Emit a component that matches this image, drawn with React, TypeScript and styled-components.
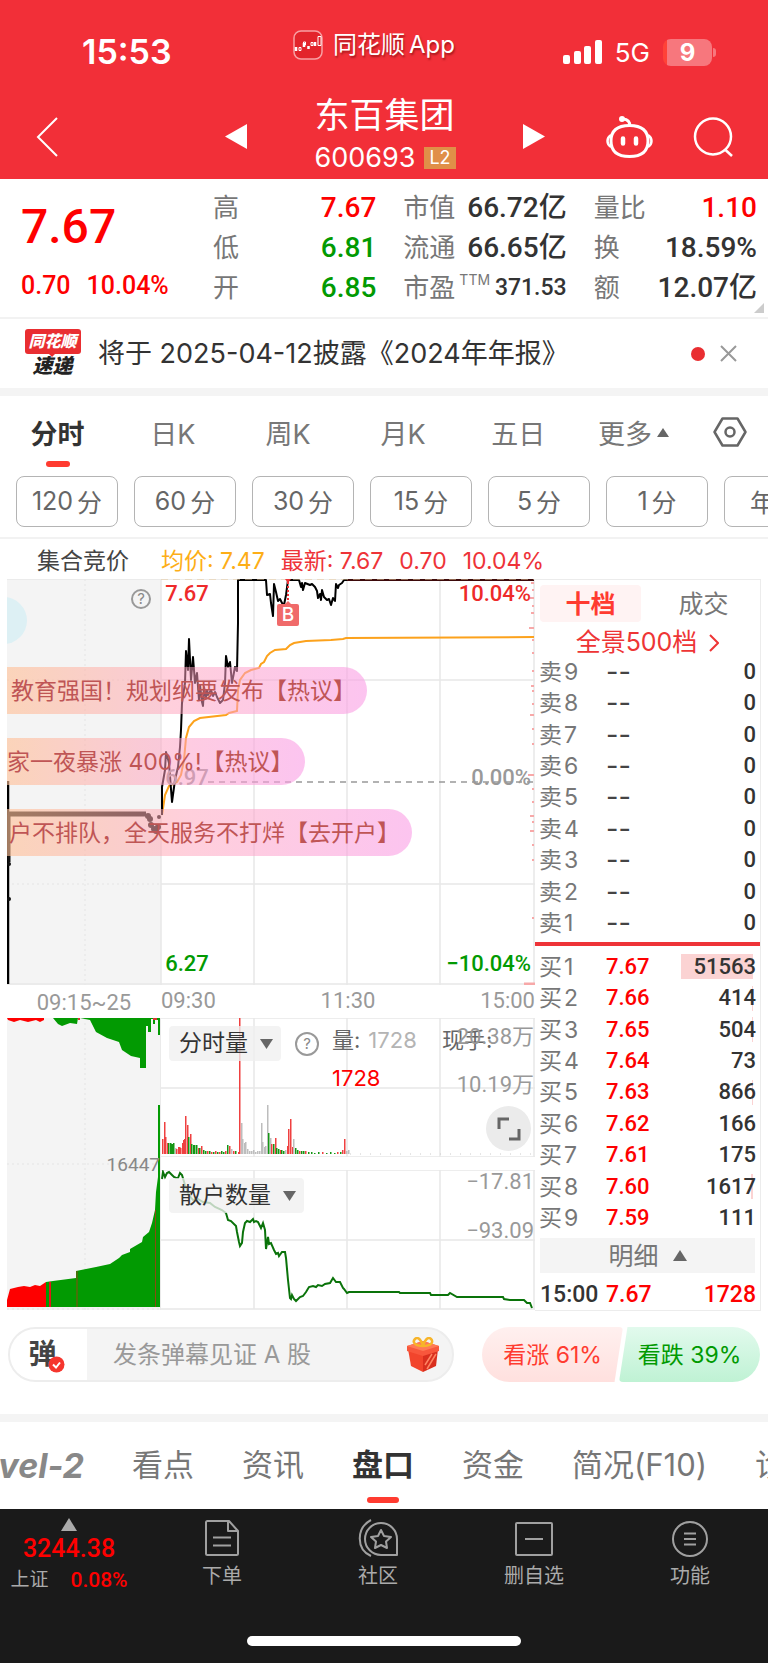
import React from 'react';
import styled, { createGlobalStyle, css } from 'styled-components';

const UI = `Inter, "Noto Sans CJK SC", sans-serif`;
const NUM = `Roboto, "Noto Sans CJK SC", sans-serif`;
const RED = '#fe0000';
const GREEN = '#029a02';

const Global = createGlobalStyle`
  *, *::before, *::after { box-sizing: border-box; }
  body { margin: 0; background: #fff; color: #333; font-family: ${UI}; overflow-x: hidden; }
  button { margin: 0; padding: 0; border: 0; background: none; color: inherit; font: inherit; cursor: pointer; }
  a { color: inherit; text-decoration: none; }
  svg { display: block; flex: none; }
  dl, dd, dt, h1, p { margin: 0; }
`;

const Page = styled.div`
  display: flex;
  flex-direction: column;
  min-height: 100vh;
  overflow: hidden;
`;

/* ---------- header ---------- */
const Header = styled.header`
  background: #f22f38;
  color: #fff;
`;
const StatusBar = styled.div`
  display: grid;
  grid-template-columns: 211px auto 1fr;
  align-items: center;
  height: 94px;
  padding: 10px 56px 0 82px;
`;
const Clock = styled.span`
  font-size: 34px;
  font-weight: 600;
  line-height: 40px;
`;
const Brand = styled.span`
  display: flex;
  align-items: center;
  gap: 10px;
  margin-bottom: 14px;
  font-size: 24px;
  line-height: 30px;
  text-shadow: 1px 2px 2px rgba(90, 0, 0, 0.5);
`;
const BrandName = styled.span`
  display: flex;
  gap: 4px;
`;
const Signals = styled.span`
  display: flex;
  align-items: center;
  justify-content: flex-end;
  gap: 13px;
  font-size: 26px;
`;
const Battery = styled.span`
  position: relative;
  width: 49px;
  height: 27px;
  border-radius: 8px;
  background: linear-gradient(90deg, #ff4238 4px, #f7777d 4px);
  color: #fff;
  font-size: 24px;
  font-weight: 700;
  line-height: 27px;
  text-align: center;
  &::after {
    content: '';
    position: absolute;
    right: -4px;
    top: 9px;
    width: 3px;
    height: 9px;
    border-radius: 0 3px 3px 0;
    background: #f7777d;
  }
`;
const TitleBar = styled.div`
  display: grid;
  grid-template-columns: 1fr auto 1fr;
  align-items: center;
  height: 85px;
  padding: 0 34px 0 36px;
`;
const StockSwitch = styled.div`
  display: flex;
  align-items: center;
  justify-content: space-between;
  width: 320px;
`;
const StockName = styled.h1`
  font-size: 35px;
  font-weight: 400;
  line-height: 42px;
`;
const StockCode = styled.p`
  display: flex;
  align-items: center;
  gap: 9px;
  font-size: 27px;
  line-height: 43px;
`;
const LevelTag = styled.span`
  padding: 0 5px;
  background: #e08f48;
  font-size: 18px;
  line-height: 22px;
`;
const TitleActions = styled.div`
  display: flex;
  justify-content: flex-end;
  gap: 40px;
`;

/* ---------- quote ---------- */
const Quote = styled.section`
  position: relative;
  display: grid;
  grid-template-columns: 165px repeat(3, 1fr);
  column-gap: 27px;
  padding: 9px 11px 9px 21px;
  border-bottom: 2px solid #f2f2f2;
`;
const LastPrice = styled.div`
  color: ${RED};
  font-family: ${NUM};
  font-weight: 500;
`;
const BigPrice = styled.div`
  font-size: 48px;
  line-height: 78px;
`;
const Change = styled.div`
  display: flex;
  gap: 16px;
  font-size: 25px;
  line-height: 40px;
  white-space: nowrap;
`;
const Stats = styled.dl`
  display: grid;
  grid-auto-rows: 40px;
`;
const Stat = styled.div`
  display: flex;
  align-items: center;
  justify-content: space-between;
  white-space: nowrap;
`;
const StatLabel = styled.dt`
  color: #777;
  font-size: 26px;
  line-height: 36px;
`;
const Sup = styled.sup`
  margin-left: 4px;
  font-size: 14px;
  line-height: 14px;
  vertical-align: 12px;
`;
const StatValue = styled.dd<{ $color?: string; $small?: boolean }>`
  color: ${p => p.$color ?? '#333'};
  font-family: ${NUM};
  font-size: ${p => (p.$small ? 23 : 28)}px;
  font-weight: 500;
  line-height: 36px;
`;
const Corner = styled.span`
  position: absolute;
  right: 4px;
  bottom: 4px;
  border: 5px solid transparent;
  border-right-color: #ccc;
  border-bottom-color: #ccc;
`;

/* ---------- news ---------- */
const News = styled.section`
  display: flex;
  align-items: center;
  height: 69px;
  padding: 0 31px 0 24px;
`;
const NewsLogo = styled.span`
  display: flex;
  flex-direction: column;
  align-items: center;
  width: 57px;
  margin-right: 17px;
  font-style: italic;
  font-weight: 900;
`;
const NewsLogoTop = styled.span`
  position: relative;
  width: 56px;
  border-radius: 3px;
  background: #e92e31;
  color: #fff;
  font-size: 16px;
  line-height: 25px;
  text-align: center;
  &::after {
    content: '';
    position: absolute;
    left: 22px;
    bottom: -8px;
    border: 5px solid transparent;
    border-top-color: #e92e31;
  }
`;
const NewsLogoBottom = styled.span`
  color: #222;
  font-size: 20px;
  line-height: 24px;
`;
const NewsLink = styled.a`
  flex: 1;
  font-size: 27px;
  line-height: 36px;
  white-space: nowrap;
`;
const Dot = styled.span`
  width: 14px;
  height: 14px;
  margin-right: 15px;
  border-radius: 50%;
  background: #e92e31;
`;
const Band = styled.div`
  height: 8px;
  background: #f4f4f4;
`;

/* ---------- period tabs ---------- */
const Periods = styled.nav`
  display: grid;
  grid-template-columns: repeat(6, 15%) 1fr;
  justify-items: center;
  align-items: center;
  height: 72px;
`;
const underline = css<{ $line: number }>`
  &::after {
    content: '';
    position: absolute;
    left: calc(50% - ${p => p.$line / 2}px);
    bottom: 0;
    width: ${p => p.$line}px;
    height: 6px;
    border-radius: 3px;
    background: #ff3b30;
  }
`;
const PeriodTab = styled.button<{ $on?: boolean; $line: number }>`
  position: relative;
  display: flex;
  align-items: center;
  gap: 5px;
  height: 70px;
  color: ${p => (p.$on ? '#333' : '#777')};
  font-size: 27px;
  font-weight: ${p => (p.$on ? 700 : 400)};
  white-space: nowrap;
  ${p => p.$on && underline}
`;
const Minutes = styled.div`
  display: flex;
  gap: 16px;
  padding: 8px 0 10px 16px;
  overflow: hidden;
  border-bottom: 2px solid #f2f2f2;
`;
const MinuteButton = styled.button`
  flex: none;
  display: flex;
  align-items: center;
  justify-content: center;
  gap: 4px;
  width: 102px;
  height: 51px;
  padding-bottom: 2px;
  border: 1px solid #b4b4b4;
  border-radius: 8px;
  color: #666;
  font-size: 25px;
`;
const Summary = styled.div`
  display: flex;
  align-items: center;
  height: 40px;
  padding: 4px 0 0 37px;
  font-size: 23px;
  line-height: 32px;
  white-space: nowrap;
`;
const SummaryGroup = styled.span<{ $color?: string; $gap?: number }>`
  display: flex;
  gap: 16px;
  margin-right: ${p => p.$gap ?? 0}px;
  color: ${p => p.$color ?? '#444'};
`;

/* ---------- charts ---------- */
const Board = styled.main`
  display: flex;
  padding: 0 7px;
`;
const Charts = styled.div`
  flex: 1;
  min-width: 0;
`;
const Plot = styled.svg`
  position: absolute;
  inset: 0;
  width: 100%;
  height: 100%;
`;
const PricePanel = styled.div`
  position: relative;
  height: 406px;
  overflow: hidden;
`;
const PriceRight = styled.div`
  position: absolute;
  inset: 0 0 0 auto;
  width: 70.8%;
`;
const Scale = styled.span<{ $top: number; $side: 'left' | 'right'; $color?: string; $axis?: boolean }>`
  position: absolute;
  top: ${p => p.$top}px;
  ${p => p.$side}: ${p => (p.$axis ? 1 : 4)}px;
  color: ${p => p.$color ?? '#999'};
  font-family: ${NUM};
  font-size: 22px;
  font-weight: ${p => (p.$axis ? 400 : 500)};
  line-height: 26px;
  white-space: nowrap;
`;
const Barrage = styled.div<{ $top: number; $w: number }>`
  position: absolute;
  left: 0;
  top: ${p => p.$top}px;
  width: ${p => p.$w}px;
  height: 47px;
  overflow: hidden;
  border-radius: 0 24px 24px 0;
  background: linear-gradient(90deg, rgba(255, 192, 150, 0.62), rgba(255, 160, 185, 0.5) 45%, rgba(250, 160, 230, 0.62));
  color: #bf5555;
  font-size: 23px;
  line-height: 48px;
  white-space: nowrap;
`;
const BarrageText = styled.span<{ $shift: number }>`
  display: block;
  margin-left: ${p => p.$shift}px;
`;
const Bubble = styled.span`
  position: absolute;
  left: -27px;
  top: 18px;
  width: 47px;
  height: 47px;
  border-radius: 50%;
  background: #ddf0f4;
`;
const HelpButton = styled.button<{ $size: number }>`
  width: ${p => p.$size}px;
  height: ${p => p.$size}px;
  border: 2px solid #999;
  border-radius: 50%;
  color: #888;
  font-size: 15px;
  line-height: 16px;
`;
const HelpCorner = styled.div`
  position: absolute;
  left: 124px;
  top: 9px;
`;
const BuyMark = styled.span`
  position: absolute;
  top: 25px;
  left: calc(53.2% - 11px);
  width: 22px;
  height: 22px;
  border-radius: 2px;
  background: #f06a6a;
  color: #fff;
  font-size: 19px;
  font-weight: 500;
  line-height: 22px;
  text-align: center;
`;
const TimeAxis = styled.div`
  display: grid;
  grid-template-columns: 154fr 374fr;
  height: 33px;
  color: #999;
  font-family: ${NUM};
  font-size: 22px;
  line-height: 32px;
`;
const AuctionTime = styled.span`
  line-height: 35px;
  text-align: center;
`;
const Times = styled.span`
  display: flex;
  justify-content: space-between;
`;
const Lower = styled.div`
  display: grid;
  grid-template-columns: 154fr 374fr;
  height: 292px;
`;
const AuctionPanel = styled.div`
  position: relative;
`;
const AuctionValue = styled.span`
  position: absolute;
  right: 1px;
  top: 134px;
  color: #888;
  font-family: ${NUM};
  font-size: 19px;
  line-height: 26px;
`;
const Indicators = styled.div`
  display: grid;
  grid-template-rows: 139px 140px;
  row-gap: 13px;
`;
const Indicator = styled.div`
  position: relative;
`;
const IndicatorHead = styled.div`
  position: absolute;
  left: 8px;
  top: 8px;
  display: flex;
  align-items: center;
  gap: 14px;
`;
const IndicatorButton = styled.button`
  display: flex;
  align-items: center;
  gap: 12px;
  height: 35px;
  padding: 0 8px 0 10px;
  border-radius: 4px;
  background: rgba(240, 240, 240, 0.78);
  color: #333;
  font-size: 23px;
  line-height: 35px;
`;
const Legend = styled.div`
  position: absolute;
  left: 171px;
  top: 6px;
  display: grid;
  grid-template-columns: 110px auto;
  row-gap: 6px;
  color: #666;
  font-size: 22px;
  line-height: 32px;
  white-space: nowrap;
`;
const Muted = styled.span`
  margin-left: 8px;
  color: #b4b4b4;
`;
const Hot = styled.span`
  color: ${RED};
`;
const ExpandButton = styled.button`
  position: absolute;
  right: 4px;
  top: 88px;
  display: grid;
  place-items: center;
  width: 45px;
  height: 45px;
  border-radius: 50%;
  background: #ebebeb;
`;

/* ---------- order book ---------- */
const Book = styled.aside`
  display: flex;
  flex-direction: column;
  width: 226px;
  border: 1px solid #ececec;
  border-width: 1px 1px 1px 0;
`;
const BookTabs = styled.div`
  display: grid;
  grid-template-columns: 1fr 1fr;
  gap: 12px;
  padding: 5px 6px 0 5px;
`;
const BookTab = styled.button<{ $on?: boolean }>`
  height: 37px;
  border-radius: 4px;
  background: ${p => (p.$on ? '#fff3f3' : 'transparent')};
  color: ${p => (p.$on ? '#ff3b30' : '#777')};
  font-size: 25px;
  font-weight: ${p => (p.$on ? 700 : 400)};
  line-height: 36px;
`;
const DepthLink = styled.a`
  display: flex;
  align-items: center;
  justify-content: center;
  gap: 12px;
  height: 34px;
  padding: 7px 0 0;
  color: #ee3535;
  font-size: 25px;
  line-height: 27px;
`;
const Orders = styled.table<{ $buy?: boolean }>`
  width: 100%;
  height: 283px;
  border-collapse: collapse;
  ${p => p.$buy && 'margin-top: 5px;'}
  th, td { padding: 0; line-height: 26px; }
`;
const OrderLabel = styled.th`
  width: 71px;
  color: #777;
  font-size: 23px;
  font-weight: 400;
  text-align: left;
`;
const OrderName = styled.span`
  display: flex;
  gap: 2px;
  padding-left: 4px;
`;
const OrderPrice = styled.td<{ $none?: boolean }>`
  color: ${p => (p.$none ? '#444' : RED)};
  font-family: ${p => (p.$none ? UI : NUM)};
  font-size: ${p => (p.$none ? 27 : 22)}px;
  font-weight: ${p => (p.$none ? 400 : 500)};
`;
const OrderVolume = styled.td<{ $bar?: number }>`
  background: linear-gradient(#fbd3d3, #fbd3d3) right 7px center / ${p => p.$bar ?? 0}px 25px no-repeat;
  color: #333;
  font-family: ${NUM};
  font-size: 22px;
  font-weight: 500;
  text-align: right;
`;
const OrderAmount = styled.span`
  margin-right: 4px;
`;
const Divider = styled.div`
  height: 4px;
  margin-top: 3px;
  background: #ee3338;
`;
const DetailButton = styled.button`
  display: flex;
  align-items: center;
  justify-content: center;
  gap: 14px;
  height: 35px;
  margin: 4px 5px 0;
  background: #f4f4f4;
  color: #777;
  font-size: 25px;
  line-height: 34px;
`;
const Trade = styled.div`
  display: flex;
  padding: 7px 4px 0 5px;
  color: ${RED};
  font-family: ${NUM};
  font-size: 23px;
  font-weight: 500;
  line-height: 30px;
`;
const TradeTime = styled.span`
  width: 66px;
  color: #333;
`;
const TradeVolume = styled.span`
  margin-left: auto;
`;

/* ---------- barrage entry and vote ---------- */
const Interact = styled.section`
  display: flex;
  gap: 28px;
  padding: 16px 8px 32px;
`;
const Entry = styled.div`
  flex: 1;
  display: flex;
  align-items: center;
  height: 55px;
  padding-right: 12px;
  overflow: hidden;
  border: 2px solid #ededed;
  border-radius: 28px;
  background: #f4f4f4;
`;
const BarrageToggle = styled.button`
  position: relative;
  align-self: stretch;
  width: 77px;
  padding-right: 12px;
  background: #fff;
  color: #444;
  font-size: 28px;
  font-weight: 700;
  line-height: 49px;
`;
const Tick = styled.svg`
  position: absolute;
  left: 38px;
  top: 27px;
`;
const EntryInput = styled.input`
  flex: 1;
  min-width: 0;
  padding: 0 0 0 26px;
  border: 0;
  outline: 0;
  background: transparent;
  font: 24px/36px ${UI};
  &::placeholder { color: #999; opacity: 1; }
`;
const Votes = styled.div`
  display: flex;
  width: 278px;
`;
const Vote = styled.button<{ $up?: boolean }>`
  flex: 1;
  height: 55px;
  font-size: 23px;
  line-height: 52px;
  ${p => p.$up
    ? css`
        border-radius: 28px 4px 4px 28px;
        background: linear-gradient(#fff0ef, #ffe0de);
        clip-path: polygon(0 0, 100% 0, 94% 100%, 0 100%);
        color: #ff3b30;
      `
    : css`
        margin-left: -4px;
        border-radius: 4px 28px 28px 4px;
        background: linear-gradient(#e2faed, #bff2d4);
        clip-path: polygon(6% 0, 100% 0, 100% 100%, 0 100%);
        color: ${GREEN};
      `}
`;

/* ---------- section tabs ---------- */
const Sections = styled.nav`
  display: flex;
  gap: 48px;
  height: 87px;
  overflow: hidden;
`;
const SectionTab = styled.button<{ $on?: boolean; $line: number }>`
  position: relative;
  flex: none;
  height: 81px;
  padding-top: 4px;
  font-size: 31px;
  line-height: 40px;
  color: ${p => (p.$on ? '#333' : '#777')};
  font-weight: ${p => (p.$on ? 700 : 400)};
  white-space: nowrap;
  ${p => p.$on && underline}
`;
const LevelTab = styled(SectionTab)`
  display: flex;
  align-items: center;
  justify-content: flex-end;
  width: 84px;
  padding-top: 6px;
  color: #888;
  font-size: 34px;
  font-style: italic;
  font-weight: 700;
`;

/* ---------- footer ---------- */
const Footer = styled.footer`
  flex: 1;
  display: flex;
  flex-direction: column;
  justify-content: space-between;
  min-height: 150px;
  background: #1a1a1a;
  color: #aaa;
`;
const FooterNav = styled.nav`
  display: grid;
  grid-template-columns: 144px repeat(4, 1fr);
`;
const IndexBox = styled.button`
  display: flex;
  flex-direction: column;
  align-items: center;
  padding: 9px 6px 0 0;
`;
const IndexValue = styled.span`
  margin-top: 3px;
  color: ${RED};
  font-family: ${NUM};
  font-size: 25px;
  font-weight: 500;
  line-height: 30px;
`;
const IndexRow = styled.span`
  display: flex;
  gap: 22px;
  font-size: 19px;
  line-height: 32px;
`;
const IndexChange = styled.span`
  color: ${RED};
  font-family: ${NUM};
  font-size: 21px;
  font-weight: 500;
`;
const FooterItem = styled.button`
  display: flex;
  flex-direction: column;
  align-items: center;
  gap: 6px;
  padding-top: 10px;
  font-size: 20px;
  line-height: 26px;
`;
const HomeBar = styled.div`
  width: 274px;
  height: 10px;
  margin: 0 auto 17px;
  border-radius: 5px;
  background: #fff;
`;

/* ---------- data ---------- */
const statColumns: { label: string; sup?: string; value: string; color?: string; small?: boolean }[][] = [
  [
    { label: '高', value: '7.67', color: RED },
    { label: '低', value: '6.81', color: GREEN },
    { label: '开', value: '6.85', color: GREEN },
  ],
  [
    { label: '市值', value: '66.72亿' },
    { label: '流通', value: '66.65亿' },
    { label: '市盈', sup: 'TTM', value: '371.53', small: true },
  ],
  [
    { label: '量比', value: '1.10', color: RED },
    { label: '换', value: '18.59%' },
    { label: '额', value: '12.07亿' },
  ],
];

const buys: [string, string, number][] = [
  ['7.67', '51563', 72], ['7.66', '414', 1], ['7.65', '504', 1], ['7.64', '73', 0], ['7.63', '866', 1],
  ['7.62', '166', 0], ['7.61', '175', 0], ['7.60', '1617', 2], ['7.59', '111', 0],
];

const priceLine =
  '162,815 162,787 165,770 166,752 169,763 172,802 175,780 178,767 180,747 181,730 182,703 185,683 186,651 188,670 189,639 191,680 193,657 195,683 197,673 199,700 200,685 202,702 203,706 204,687 206,698 207,690 208,695 211,690 213,696 215,692 217,697 220,703 223,700 225,683 226,656 228,667 230,662 232,683 235,667 237,671 238,623 238,580 266,580 267,595 270,594 271,603 273,616 274,584 276,592 278,601 280,599 282,603 284,605 286,595 288,580 299,580 301,587 302,583 303,590 305,583 310,585 312,584 315,587 317,591 318,598 320,594 321,600 322,590 324,597 327,600 329,599 331,605 333,598 335,601 336,584 338,588 339,585 342,583 344,580 534,580';
const averageLine =
  '162,815 165,795 169,786 177,782 181,775 184,760 186,738 189,727 194,721 200,718 226,715 229,713 237,711 238,690 240,680 245,673 251,670 259,668 261,664 264,662 267,656 270,653 275,650 286,649 290,645 294,643 306,641 331,640 343,639 346,638 534,637';
const retailLine =
  '162,1179 163,1172 165,1177 167,1173 169,1172 172,1175 174,1177 176,1178 178,1178 180,1173 182,1175 185,1185 189,1195 193,1200 198,1199 203,1202 210,1203 215,1207 222,1210 226,1213 228,1220 231,1221 236,1226 237,1232 239,1242 240,1246 242,1243 243,1232 245,1223 247,1221 250,1222 253,1219 254,1222 256,1221 258,1222 261,1228 263,1223 265,1230 266,1249 268,1237 269,1244 271,1243 274,1250 276,1254 278,1253 279,1256 282,1252 285,1252 286,1258 288,1280 290,1298 291,1299 292,1295 294,1299 296,1301 300,1297 303,1296 306,1292 309,1287 313,1286 316,1287 318,1285 322,1286 325,1284 330,1283 333,1278 336,1282 340,1282 343,1288 344,1289 347,1293 349,1292 399,1292 400,1293 430,1293 431,1295 448,1295 450,1293 457,1297 503,1297 504,1299 510,1300 524,1300 527,1303 530,1303 532,1308';

const R = '#ef4040';
const G = '#149614';
const N = '#bdbdbd';
const bars: [number, number, string][] = [
  [162, 15, R], [164, 32, R], [165, 17, R], [167, 11, R], [168, 11, G], [170, 11, G], [171, 10, G], [172, 10, G], [173, 11, G],
  [175, 6, N], [176, 5, R], [178, 7, R], [179, 7, R], [180, 6, R], [182, 11, R], [183, 14, R], [184, 15, R], [185, 38, R], [187, 29, R],
  [188, 17, G], [190, 20, R], [191, 10, G], [193, 9, G], [194, 9, G], [196, 9, G], [198, 6, R], [199, 6, G], [201, 8, R], [203, 4, G],
  [205, 3, G], [207, 3, R], [209, 3, G], [211, 2, R], [213, 2, G], [215, 3, R], [217, 2, G], [219, 2, R], [221, 3, G], [223, 2, G],
  [225, 3, R], [227, 9, G], [229, 8, R], [231, 5, N], [233, 3, R], [235, 3, G], [238, 2, R], [239, 136, R], [241, 31, N], [242, 15, N],
  [244, 11, N], [245, 12, N], [247, 5, N], [249, 3, N], [251, 3, N], [253, 4, N], [255, 2, N], [257, 3, N], [259, 3, N], [261, 31, N],
  [262, 12, N], [264, 7, N], [265, 8, N], [267, 49, N], [268, 21, G], [270, 16, N], [271, 10, R], [273, 10, G], [275, 16, R], [276, 6, G],
  [278, 5, G], [280, 4, R], [281, 4, G], [283, 3, G], [285, 4, N], [287, 8, R], [288, 25, R], [290, 35, R], [292, 7, R], [293, 15, N],
  [295, 6, G], [297, 4, G], [299, 3, R], [301, 3, G], [303, 3, G], [305, 3, R], [308, 2, G], [311, 2, G], [314, 1, G], [318, 2, G],
  [322, 2, R], [326, 1, G], [330, 2, G], [334, 1, G], [337, 2, R], [340, 2, G], [342, 4, R], [344, 15, R], [346, 3, N], [348, 4, N],
];
const edgeTicks: [number, number][] = [
  [583, 3], [590, 2], [598, 4], [606, 2], [613, 3], [628, 5], [640, 2], [653, 2], [671, 2], [686, 3], [691, 2], [704, 2], [715, 4],
  [729, 2], [744, 2], [775, 6], [789, 2], [802, 2], [816, 4], [822, 2], [831, 4], [845, 2], [860, 2], [918, 2],
];

const Triangle = ({ up, w = 13, color = '#666' }: { up?: boolean; w?: number; color?: string }) => (
  <svg width={w} height={w - 3} viewBox="0 0 12 9" preserveAspectRatio="none">
    <path d={up ? 'M6 0L12 9H0Z' : 'M0 0H12L6 9Z'} fill={color} />
  </svg>
);

const PriceChart = () => (
  <Plot viewBox="7 579 528 406" preserveAspectRatio="none" fill="none">
    <path d="M7 579H161V985H7Z" fill="#f4f4f4" />
    <path d="M85 579V985M7 680H161M7 884H161" stroke="#e4e4e4" strokeDasharray="2 3" />
    <path d="M161 579V985M254 579V985M347 579V985M440 579V985M534 579V985M161 680H535M161 884H535M7 984H535M7 579H535" stroke="#e8e8e8" strokeWidth="1.5" />
    <path d="M208 782H534" stroke="#999" strokeWidth="1.5" strokeDasharray="6 5" />
    <path d="M8 781V984" stroke="#000" strokeWidth="2.5" />
    <path d="M8 814H146" stroke="#111" strokeWidth="5" />
    <path d="M9 815V862" stroke="#111" strokeWidth="3" />
    <g fill="#111">
      <circle cx="9" cy="864" r="2" /><circle cx="9" cy="899" r="2" /><circle cx="148" cy="816" r="3" />
      <circle cx="150" cy="819" r="3" /><circle cx="151" cy="825" r="3" /><circle cx="154" cy="829" r="3" />
      <circle cx="156" cy="831" r="3" /><circle cx="158" cy="827" r="3" /><circle cx="159" cy="817" r="2" />
    </g>
    <polyline points={averageLine} stroke="#fca21c" strokeWidth="2" />
    <polyline points={priceLine} stroke="#000" strokeWidth="2" strokeLinejoin="round" />
    <path d="M347 580H534" stroke="#7a1416" strokeWidth="1" />
    <path d="M161 579H534" stroke="#e5c79b" strokeDasharray="7 5" />
    <path d="M288 582V603" stroke="#ee3338" strokeWidth="2" strokeDasharray="2 2" />
    <path d="M285 579H291L288 583Z" fill="#ee3338" />
    <path d="M288 601L292 605H284Z" fill="#f06a6a" />
    {edgeTicks.map(([y, w]) => (
      <path key={y} d={`M534 ${y}h${-w}`} stroke="#f7a8a8" strokeWidth="2" />
    ))}
    <path d="M524 984H535" stroke="#f7a8a8" strokeWidth="3" />
  </Plot>
);

const AuctionChart = () => (
  <Plot viewBox="7 1018 154 292" preserveAspectRatio="none">
    <path d="M7 1018H161V1310H7Z" fill="#f4f4f4" />
    <path d="M85 1018V1310M7 1164H161M7 1309H161" stroke="#e4e4e4" strokeDasharray="2 3" />
    <path d="M161 1018V1310" stroke="#e0e0e0" />
    <path d="M7 1018H44V1020L40 1022L36 1020L28 1022L20 1020L14 1022L8 1020Z" fill="#fe0000" />
    <path d="M53 1018H78L77 1024L70 1023L62 1026L58 1024ZM80 1018H160V1035H158V1020H155V1024H153V1019H151V1032H148V1026H146V1068H140V1058L131 1056L125 1052L122 1050L119 1042L107 1038L96 1032L90 1020Z" fill={GREEN} />
    <path d="M153 1018H157V1020H153ZM78 1018H80V1020H78Z" fill="#d33" />
    <path d="M7 1307V1300L10 1289L14 1288L18 1287L24 1286L30 1287L35 1285L40 1286L46 1282V1307Z" fill="#fe0000" />
    <path d="M46 1307V1282L53 1281L76 1278V1271L96 1267L110 1264L119 1258L122 1255L130 1252V1249L142 1242L143 1237L149 1232L152 1223L155 1210L156 1192L158 1177V1105H160V1307Z" fill={GREEN} />
    <path d="M49 1282H51V1307H49Z" fill="#e01818" />
    <path d="M77 1271V1307M155.500 1210V1307" stroke="#8a4a10" />
  </Plot>
);

const Grid = ({ y0, y1, mid }: { y0: number; y1: number; mid: number }) => (
  <path
    d={`M161 ${y0}H535M161 ${y1}H535M161 ${mid}H535M254 ${y0}V${y1}M347 ${y0}V${y1}M440 ${y0}V${y1}M534 ${y0}V${y1}`}
    stroke="#e8e8e8"
    strokeWidth="1.5"
  />
);

export default function App() {
  return (
    <Page>
      <Global />
      <Header>
        <StatusBar>
          <Clock>15:53</Clock>
          <Brand>
            <svg width="30" height="30" viewBox="0 0 30 30" fill="none">
              <rect x="1" y="1" width="28" height="28" rx="7" fill="#e3242b" stroke="#f8a0a3" strokeWidth="1.500" />
              <path d="M3 17v4M11 13v4M15.500 16v3M22 12v4" stroke="#fff" strokeWidth="2.500" />
              <path d="M6 17.500h2v3h-2zM10.500 12h2v3h-2zM18 12.500h2v3h-2zM25 6.500h3v9h-3z" stroke="#fff" />
            </svg>
            <BrandName><span>同花顺</span><span>App</span></BrandName>
          </Brand>
          <Signals>
            <svg width="39" height="24" viewBox="0 0 39 24" fill="#fff">
              <rect x="0" y="15" width="7" height="9" rx="2" />
              <rect x="11" y="11" width="7" height="13" rx="2" />
              <rect x="21" y="6" width="7" height="18" rx="2" />
              <rect x="32" y="0" width="7" height="24" rx="2" />
            </svg>
            5G
            <Battery>9</Battery>
          </Signals>
        </StatusBar>
        <TitleBar>
          <button aria-label="返回">
            <svg width="22" height="40" viewBox="0 0 22 40" fill="none" stroke="#fff" strokeWidth="2">
              <path d="M21 1L2 20L21 39" />
            </svg>
          </button>
          <StockSwitch>
            <button aria-label="上一只">
              <svg width="22" height="25"><path d="M22 0V25L0 12.500Z" fill="#fff" /></svg>
            </button>
            <div>
              <StockName>东百集团</StockName>
              <StockCode>600693 <LevelTag>L2</LevelTag></StockCode>
            </div>
            <button aria-label="下一只">
              <svg width="22" height="25"><path d="M0 0V25L22 12.500Z" fill="#fff" /></svg>
            </button>
          </StockSwitch>
          <TitleActions>
            <button aria-label="智能助手">
              <svg width="47" height="42" viewBox="0 0 47 42" fill="none" stroke="#fff" strokeWidth="3">
                <path d="M23.500 9.500C35 9.500 42 14 42 25S35 40.500 23.500 40.500S5 36 5 25S12 9.500 23.500 9.500Z" />
                <path d="M5 19C2 21 1.500 23 1.500 25S2 29 5 31M42 19C45 21 45.500 23 45.500 25S45 29 42 31" strokeWidth="2.500" />
                <path d="M23.500 9.500C24 6 22 3.500 17 3" />
                <circle cx="16" cy="3" r="1.500" fill="#fff" />
                <path d="M17 22.500V27.500M30 22.500V27.500" strokeWidth="4.500" strokeLinecap="round" />
              </svg>
            </button>
            <button aria-label="搜索">
              <svg width="41" height="40" viewBox="0 0 41 40" fill="none" stroke="#fff" strokeWidth="2.500">
                <circle cx="20" cy="19.500" r="18" />
                <path d="M32 32.500L39 39" />
              </svg>
            </button>
          </TitleActions>
        </TitleBar>
      </Header>

      <Quote>
        <LastPrice>
          <BigPrice>7.67</BigPrice>
          <Change><span>0.70</span><span>10.04%</span></Change>
        </LastPrice>
        {statColumns.map((column, i) => (
          <Stats key={i}>
            {column.map(s => (
              <Stat key={s.label}>
                <StatLabel>{s.label}{s.sup && <Sup>{s.sup}</Sup>}</StatLabel>
                <StatValue $color={s.color} $small={s.small}>{s.value}</StatValue>
              </Stat>
            ))}
          </Stats>
        ))}
        <Corner />
      </Quote>

      <News>
        <NewsLogo>
          <NewsLogoTop>同花顺</NewsLogoTop>
          <NewsLogoBottom>速递</NewsLogoBottom>
        </NewsLogo>
        <NewsLink href="#news">将于 2025-04-12披露《2024年年报》</NewsLink>
        <Dot />
        <button aria-label="关闭">
          <svg width="17" height="17" viewBox="0 0 17 17" stroke="#999" strokeWidth="2"><path d="M1 1L16 16M16 1L1 16" /></svg>
        </button>
      </News>
      <Band />

      <Periods>
        <PeriodTab $on $line={24}>分时</PeriodTab>
        {['日K', '周K', '月K', '五日'].map(t => (
          <PeriodTab key={t} $line={24}>{t}</PeriodTab>
        ))}
        <PeriodTab $line={24}>更多<Triangle up w={12} /></PeriodTab>
        <button aria-label="设置">
          <svg width="34" height="30" viewBox="0 0 34 30" fill="none" stroke="#666" strokeWidth="2.500" strokeLinejoin="round">
            <path d="M9.500 1.500H24.500L32.500 15L24.500 28.500H9.500L1.500 15Z" />
            <circle cx="17" cy="15" r="4.500" />
          </svg>
        </button>
      </Periods>
      <Minutes>
        {[120, 60, 30, 15, 5, 1].map(n => (
          <MinuteButton key={n}><span>{n}</span><span>分</span></MinuteButton>
        ))}
        <MinuteButton>年线</MinuteButton>
      </Minutes>
      <Summary>
        <SummaryGroup $gap={32}>集合竞价</SummaryGroup>
        <SummaryGroup $color="#fdae17" $gap={16}>均价: 7.47</SummaryGroup>
        <SummaryGroup $color="#ee3338"><span>最新: 7.67</span><span>0.70</span><span>10.04%</span></SummaryGroup>
      </Summary>

      <Board>
        <Charts>
          <PricePanel>
            <PriceChart />
            <Bubble />
            <HelpCorner><HelpButton $size={20} aria-label="集合竞价说明">?</HelpButton></HelpCorner>
            <PriceRight>
              <Scale $top={2} $side="left" $color="#ee2a2a">7.67</Scale>
              <Scale $top={2} $side="right" $color="#ee2a2a">10.04%</Scale>
              <Scale $top={186} $side="left">6.97</Scale>
              <Scale $top={186} $side="right">0.00%</Scale>
              <Scale $top={372} $side="left" $color={GREEN}>6.27</Scale>
              <Scale $top={372} $side="right" $color={GREEN}>−10.04%</Scale>
            </PriceRight>
            <BuyMark>B</BuyMark>
            <Barrage $top={88} $w={360}><BarrageText $shift={4}>教育强国！规划纲要发布【热议】</BarrageText></Barrage>
            <Barrage $top={159} $w={298}><BarrageText $shift={0}>家一夜暴涨 400%!【热议】</BarrageText></Barrage>
            <Barrage $top={230} $w={405}><BarrageText $shift={2}>户不排队，全天服务不打烊【去开户】</BarrageText></Barrage>
          </PricePanel>
          <TimeAxis>
            <AuctionTime>09:15~25</AuctionTime>
            <Times><span>09:30</span><span>11:30</span><span>15:00</span></Times>
          </TimeAxis>
          <Lower>
            <AuctionPanel>
              <AuctionChart />
              <AuctionValue>16447</AuctionValue>
            </AuctionPanel>
            <Indicators>
              <Indicator>
                <Plot viewBox="161 1018 374 139" preserveAspectRatio="none">
                  <Grid y0={1018} y1={1157} mid={1088} />
                  {bars.map(([x, h, c], i) => (
                    <rect key={i} x={x} y={1154 - h} width="1.500" height={h} fill={c} />
                  ))}
                  <path d="M350 1154H534" stroke="#ccc" strokeDasharray="1 9" />
                </Plot>
                <IndicatorHead>
                  <IndicatorButton>分时量<Triangle /></IndicatorButton>
                  <HelpButton $size={24} aria-label="分时量说明">?</HelpButton>
                </IndicatorHead>
                <Legend>
                  <span>量:<Muted>1728</Muted></span>
                  <span>现手:</span>
                  <Hot>1728</Hot>
                </Legend>
                <Scale $top={6} $side="right" $axis>20.38万</Scale>
                <Scale $top={54} $side="right" $axis>10.19万</Scale>
                <ExpandButton aria-label="全屏">
                  <svg width="24" height="24" viewBox="0 0 24 24" fill="none" stroke="#666" strokeWidth="3">
                    <path d="M2 12V2H12M22 12V22H12" />
                  </svg>
                </ExpandButton>
              </Indicator>
              <Indicator>
                <Plot viewBox="161 1170 374 140" preserveAspectRatio="none" fill="none">
                  <Grid y0={1170} y1={1309} mid={1240} />
                  <polyline points={retailLine} stroke="#0a730a" strokeWidth="2" />
                </Plot>
                <IndicatorHead><IndicatorButton>散户数量<Triangle /></IndicatorButton></IndicatorHead>
                <Scale $top={-1} $side="right" $axis>−17.81</Scale>
                <Scale $top={48} $side="right" $axis>−93.09</Scale>
              </Indicator>
            </Indicators>
          </Lower>
        </Charts>

        <Book>
          <BookTabs>
            <BookTab $on>十档</BookTab>
            <BookTab>成交</BookTab>
          </BookTabs>
          <DepthLink href="#depth">
            全景500档
            <svg width="10" height="18" viewBox="0 0 10 18" fill="none" stroke="#ee3535" strokeWidth="2"><path d="M1 1L9 9L1 17" /></svg>
          </DepthLink>
          <Orders>
            <tbody>
              {[9, 8, 7, 6, 5, 4, 3, 2, 1].map(n => (
                <tr key={n}>
                  <OrderLabel scope="row"><OrderName><span>卖</span><span>{n}</span></OrderName></OrderLabel>
                  <OrderPrice $none>--</OrderPrice>
                  <OrderVolume><OrderAmount>0</OrderAmount></OrderVolume>
                </tr>
              ))}
            </tbody>
          </Orders>
          <Divider />
          <Orders $buy>
            <tbody>
              {buys.map(([price, volume, bar], i) => (
                <tr key={price}>
                  <OrderLabel scope="row"><OrderName><span>买</span><span>{i + 1}</span></OrderName></OrderLabel>
                  <OrderPrice>{price}</OrderPrice>
                  <OrderVolume $bar={bar}><OrderAmount>{volume}</OrderAmount></OrderVolume>
                </tr>
              ))}
            </tbody>
          </Orders>
          <DetailButton>明细<Triangle up w={14} /></DetailButton>
          <Trade><TradeTime>15:00</TradeTime><span>7.67</span><TradeVolume>1728</TradeVolume></Trade>
        </Book>
      </Board>

      <Interact>
        <Entry>
          <BarrageToggle aria-label="弹幕开关">
            弹
            <Tick width="17" height="17" viewBox="0 0 17 17" fill="none">
              <circle cx="8.500" cy="8.500" r="8" fill="#f5362e" />
              <path d="M5 8.500L8 11.500L12 6.500" stroke="#fff" strokeWidth="2" />
            </Tick>
          </BarrageToggle>
          <EntryInput aria-label="发送弹幕" placeholder="发条弹幕见证 A 股" />
          <svg width="34" height="36" viewBox="0 0 34 36">
            <path d="M2 12L17 17V35L5 29Z" fill="#f2452c" />
            <path d="M32 12L17 17V35L30 29Z" fill="#d92f1e" />
            <path d="M1 9L17 4L33 9V14L17 19L1 14Z" fill="#f8573c" />
            <path d="M1 9L17 4L33 9L17 14Z" fill="#ff7a55" />
            <path d="M21 32L30 17M19 28L26 17" stroke="#ff8462" strokeWidth="1.500" />
            <path d="M17 9C9 9 6 5 9 2S16 4 17 9C18 4 22 -1 25 2S25 9 17 9Z" fill="none" stroke="#f7b429" strokeWidth="2.500" />
          </svg>
        </Entry>
        <Votes>
          <Vote $up>看涨 61%</Vote>
          <Vote>看跌 39%</Vote>
        </Votes>
      </Interact>
      <Band />

      <Sections>
        <LevelTab $line={32}>Level-2</LevelTab>
        <SectionTab $line={32}>看点</SectionTab>
        <SectionTab $line={32}>资讯</SectionTab>
        <SectionTab $on $line={32}>盘口</SectionTab>
        <SectionTab $line={32}>资金</SectionTab>
        <SectionTab $line={32}>简况(F10)</SectionTab>
        <SectionTab $line={32}>诊股</SectionTab>
      </Sections>

      <Footer>
        <FooterNav>
          <IndexBox>
            <Triangle up w={16} color="#aaa" />
            <IndexValue>3244.38</IndexValue>
            <IndexRow>上证<IndexChange>0.08%</IndexChange></IndexRow>
          </IndexBox>
          <FooterItem>
            <svg width="36" height="38" viewBox="0 0 36 38" fill="none" stroke="#a0a0a0" strokeWidth="2" strokeLinejoin="round">
              <path d="M2 3.500Q2 2 3.500 2H25L34 12V34.500Q34 36 32.500 36H3.500Q2 36 2 34.500ZM24 2V12H34M9 18.500H27M9 26.500H27" />
            </svg>
            下单
          </FooterItem>
          <FooterItem>
            <svg width="42" height="38" viewBox="0 0 42 38" fill="none" stroke="#a0a0a0" strokeWidth="2" strokeLinejoin="round">
              <path d="M24 4A16 16 0 0 0 24 36H40V20A16 16 0 0 0 24 4Z" />
              <path d="M14 1C-1 9 -1 30 14 37" />
              <path d="M24 11L27 17L34 18L29 22.500L30 29L24 26L18 29L19 22.500L14 18L21 17Z" />
            </svg>
            社区
          </FooterItem>
          <FooterItem>
            <svg width="38" height="38" viewBox="0 0 38 38" fill="none" stroke="#a0a0a0" strokeWidth="2">
              <rect x="1" y="4" width="36" height="32" rx="1" />
              <path d="M10 20H28" />
            </svg>
            删自选
          </FooterItem>
          <FooterItem>
            <svg width="38" height="38" viewBox="0 0 38 38" fill="none" stroke="#a0a0a0" strokeWidth="2">
              <circle cx="19" cy="20" r="17" />
              <path d="M13 14.500H25M13 20H25M13 25.500H25" />
            </svg>
            功能
          </FooterItem>
        </FooterNav>
        <HomeBar />
      </Footer>
    </Page>
  );
}
